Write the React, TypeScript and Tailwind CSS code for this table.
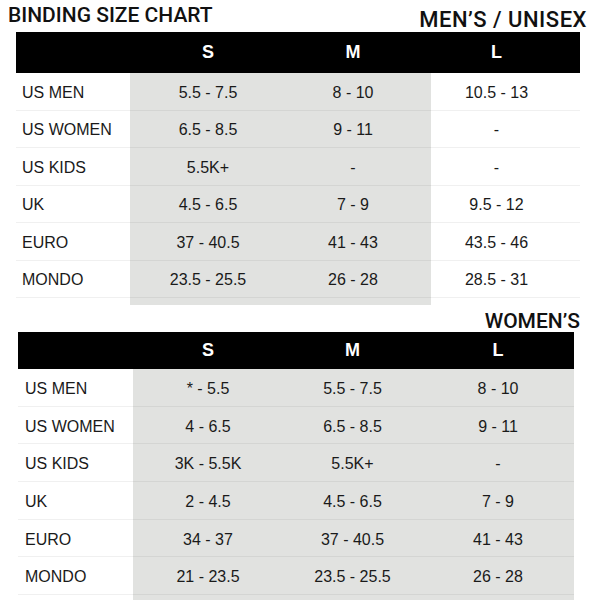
const mens = [
  ["US MEN", "5.5 - 7.5", "8 - 10", "10.5 - 13"],
  ["US WOMEN", "6.5 - 8.5", "9 - 11", "-"],
  ["US KIDS", "5.5K+", "-", "-"],
  ["UK", "4.5 - 6.5", "7 - 9", "9.5 - 12"],
  ["EURO", "37 - 40.5", "41 - 43", "43.5 - 46"],
  ["MONDO", "23.5 - 25.5", "26 - 28", "28.5 - 31"],
];

const womens = [
  ["US MEN", "* - 5.5", "5.5 - 7.5", "8 - 10"],
  ["US WOMEN", "4 - 6.5", "6.5 - 8.5", "9 - 11"],
  ["US KIDS", "3K - 5.5K", "5.5K+", "-"],
  ["UK", "2 - 4.5", "4.5 - 6.5", "7 - 9"],
  ["EURO", "34 - 37", "37 - 40.5", "41 - 43"],
  ["MONDO", "21 - 23.5", "23.5 - 25.5", "26 - 28"],
];

function MensTable() {
  return (
    <div className="ml-[16px] w-[564px]">
      <div className="flex h-[41px] bg-black text-white font-bold text-[18px] items-center">
        <div className="w-[114px]" />
        <div className="w-[156px] text-center">S</div>
        <div className="w-[145px] text-center pr-[11px]">M</div>
        <div className="w-[149px] text-center pr-[18px]">L</div>
      </div>
      {mens.map((r) => (
        <div key={r[0]} className="flex h-[37.5px] text-[16px] text-[#1a1a1a]">
          <div className="w-[114px] h-full flex items-center pt-[3px] pl-[6px] border-b border-[#f0f0f0]">{r[0]}</div>
          <div className="w-[156px] h-full flex items-center justify-center pt-[3px] bg-[#e1e2e0] border-b border-[#d4d5d3]">{r[1]}</div>
          <div className="w-[145px] h-full flex items-center justify-center pt-[3px] pr-[11px] bg-[#e1e2e0] border-b border-[#d4d5d3]">{r[2]}</div>
          <div className="w-[149px] h-full flex items-center justify-center pt-[3px] pr-[18px] border-b border-[#f0f0f0]">{r[3]}</div>
        </div>
      ))}
      <div className="flex h-[7px]">
        <div className="w-[114px]" />
        <div className="w-[301px] bg-[#e1e2e0]" />
      </div>
    </div>
  );
}

function WomensTable() {
  return (
    <div className="ml-[18px] w-[556px]">
      <div className="flex h-[37px] bg-black text-white font-bold text-[18px] items-center">
        <div className="w-[115px]" />
        <div className="w-[150px] text-center">S</div>
        <div className="w-[139px] text-center">M</div>
        <div className="w-[152px] text-center">L</div>
      </div>
      {womens.map((r) => (
        <div key={r[0]} className="flex h-[37.7px] text-[16px] text-[#1a1a1a]">
          <div className="w-[115px] h-full flex items-center pt-[3px] pl-[7px] border-b border-[#f0f0f0]">{r[0]}</div>
          <div className="w-[150px] h-full flex items-center justify-center pt-[3px] bg-[#e1e2e0] border-b border-[#d4d5d3]">{r[1]}</div>
          <div className="w-[139px] h-full flex items-center justify-center pt-[3px] bg-[#e1e2e0] border-b border-[#d4d5d3]">{r[2]}</div>
          <div className="w-[152px] h-full flex items-center justify-center pt-[3px] bg-[#e1e2e0] border-b border-[#d4d5d3]">{r[3]}</div>
        </div>
      ))}
      <div className="flex h-[6px]">
        <div className="w-[115px]" />
        <div className="w-[441px] bg-[#e1e2e0]" />
      </div>
    </div>
  );
}

export default function App() {
  return (
    <div className="w-[600px] h-[600px] overflow-hidden bg-white font-['Liberation_Sans',Arial,sans-serif] text-[#111]">
      <div className="flex justify-between items-end h-[32px] pl-[8px] pr-[13px] font-['Roboto',sans-serif] font-medium">
        <div className="text-[21px] leading-none self-start mt-[5px]">BINDING SIZE CHART</div>
        <div className="text-[22px] leading-none tracking-[0.5px] mb-[1px]">MEN’S / UNISEX</div>
      </div>
      <MensTable />
      <div className="flex justify-end h-[27px] items-end pr-[20px] font-['Roboto',sans-serif] font-medium">
        <div className="text-[21px] leading-none">WOMEN’S</div>
      </div>
      <WomensTable />
    </div>
  );
}
